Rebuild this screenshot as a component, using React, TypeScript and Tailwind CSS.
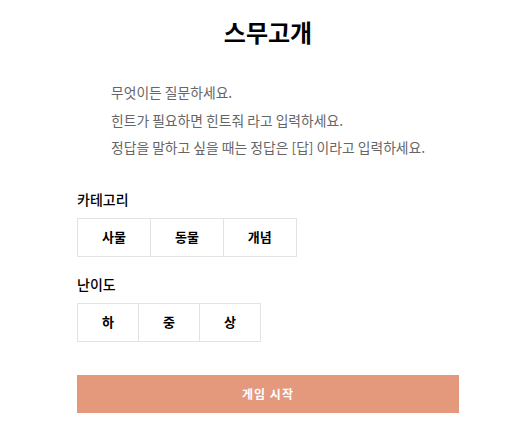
import React, { useState } from "react"

const categories = ["사물", "동물", "개념"]
const levels = ["하", "중", "상"]

const font = { fontFamily: '"Noto Sans CJK KR", "Noto Sans", sans-serif' }

function OptionGroup({ label, options, selected, onSelect }: {
  label: string
  options: string[]
  selected: string | null
  onSelect: (v: string) => void
}) {
  return (
    <div>
      <div className="text-[14px] font-medium text-black leading-[20px]">{label}</div>
      <div className="mt-[9px] flex">
        {options.map((o, i) => (
          <button
            key={o}
            onClick={() => onSelect(o)}
            className={`h-[39px] px-[24px] border border-[#e3e3e3] bg-white text-[13px] font-bold text-black ${i > 0 ? "-ml-px" : ""} ${selected === o ? "bg-[#f5f5f5]" : ""}`}
          >
            {o}
          </button>
        ))}
      </div>
    </div>
  )
}

export default function App() {
  const [category, setCategory] = useState<string | null>(null)
  const [level, setLevel] = useState<string | null>(null)

  return (
    <div className="min-h-[437px] bg-white" style={font}>
      <div className="ml-[77px] w-[382px] pt-[16px]">
        <h1 className="text-center text-[24px] font-bold leading-[32px] text-black">스무고개</h1>

        <div className="mt-[31px] pl-[34px] text-[13.8px] leading-[27.5px] text-[#666]">
          <p>무엇이든 질문하세요.</p>
          <p>힌트가 필요하면 힌트줘 라고 입력하세요.</p>
          <p>정답을 말하고 싶을 때는 정답은 [답] 이라고 입력하세요.</p>
        </div>

        <div className="mt-[27px] flex flex-col gap-[17px]">
          <OptionGroup label="카테고리" options={categories} selected={category} onSelect={setCategory} />
          <OptionGroup label="난이도" options={levels} selected={level} onSelect={setLevel} />
        </div>

        <button className="mt-[33px] h-[38px] w-full bg-[#e4987c] text-[12px] font-bold text-white tracking-[1px]">
          게임 시작
        </button>
      </div>
    </div>
  )
}
